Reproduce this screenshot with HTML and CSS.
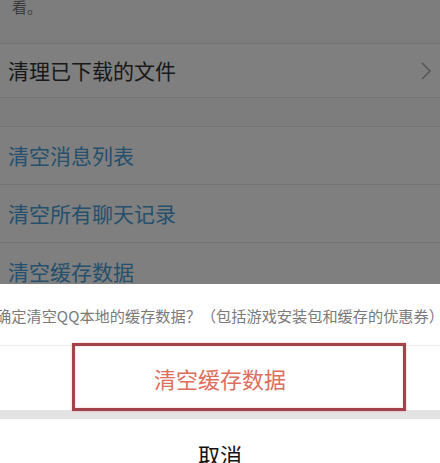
FILE: index.html
```
<!DOCTYPE html>
<html lang="zh-CN">
<head>
<meta charset="utf-8">
<title>清理缓存</title>
<link rel="stylesheet" href="styles.css">
</head>
<body>
<div class="page">
  <p class="desc">看。</p>
  <div class="group">
    <div class="row row-first">
      <span>清理已下载的文件</span>
      <svg class="chev" width="12" height="20" viewBox="0 0 12 20"><polyline points="2,2 10,10 2,18" fill="none" stroke="#aaa" stroke-width="1.5"/></svg>
    </div>
  </div>
  <div class="group">
    <div class="row blue">清空消息列表</div>
    <div class="row blue">清空所有聊天记录</div>
    <div class="row blue">清空缓存数据</div>
  </div>
</div>
<div class="mask"></div>
<div class="sheet">
  <div class="prompt"><span>确定清空QQ本地的缓存数据？（包括游戏安装包和缓存的优惠券）</span></div>
  <div class="action danger">清空缓存数据</div>
  <div class="sep"></div>
  <div class="action cancel">取消</div>
</div>
<div class="mark"></div>
</body>
</html>
```
FILE: styles.css
```
html, body {
  margin: 0;
  padding: 0;
  width: 440px;
  height: 463px;
  overflow: hidden;
  font-family: "Noto Sans CJK SC", "Noto Sans", sans-serif;
  background: #fff;
}
.page {
  background: #fafafa;
}
.desc {
  margin: -3px 0 0 0;
  padding: 0 0 26px 12px;
  font-size: 15px;
  line-height: 20px;
  color: #777;
  background: #fafafa;
}
.group {
  background: #fff;
  border-top: 1px solid #e9e9e9;
  border-bottom: 1px solid #e9e9e9;
  margin-bottom: 28px;
}
.row {
  display: flex;
  align-items: center;
  justify-content: space-between;
  height: 57px;
  padding: 0 8px;
  font-size: 21px;
  line-height: 1;
  color: #333;
  border-top: 1px solid #e9e9e9;
}
.group .row:first-child {
  border-top: none;
}
.row-first {
  height: 53px;
}
.chev {
  margin-right: 0;
}
.blue {
  color: #4a9fd8;
}
.mask {
  position: fixed;
  inset: 0;
  background: rgba(0, 0, 0, 0.5);
}
.sheet {
  position: fixed;
  left: 0;
  right: 0;
  top: 284px;
  background: #fff;
}
.prompt {
  display: flex;
  justify-content: center;
  align-items: center;
  height: 62px;
  padding-top: 3px;
  box-sizing: border-box;
  font-size: 15.2px;
  line-height: 1;
  color: #7a7a7a;
  white-space: nowrap;
  border-bottom: 1px solid #ececec;
  overflow: hidden;
}
.action {
  display: flex;
  justify-content: center;
  align-items: center;
  font-size: 22px;
  line-height: 1;
}
.danger {
  height: 64px;
  color: #df6d5e;
}
.sep {
  height: 9px;
  background: #e3e3e3;
}
.cancel {
  height: 70px;
  color: #111;
}
.mark {
  position: fixed;
  left: 72px;
  top: 343px;
  width: 334px;
  height: 68px;
  box-sizing: border-box;
  border: 3px solid #a4424b;
  box-shadow: 0 0 2px rgba(230, 80, 80, 0.4), inset 0 0 2px rgba(230, 80, 80, 0.4);
}
```
